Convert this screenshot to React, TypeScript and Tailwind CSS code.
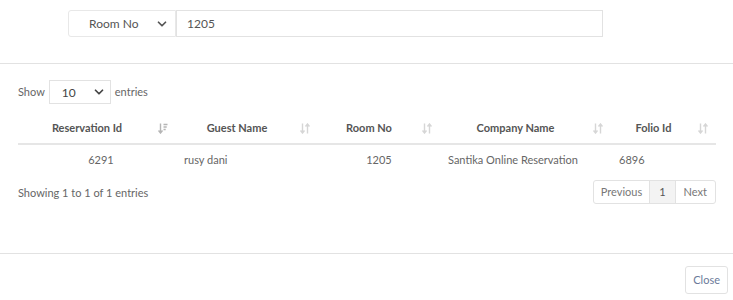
import { ChevronDown } from "lucide-react";

const font = { fontFamily: '"Lato", "Open Sans", sans-serif' };

function SortBoth() {
    return (
        <svg width="10" height="11" viewBox="0 0 10 11" className="text-[#d6d6d6]">
            <path d="M2.5 0.5v9M0.5 7.5l2 2.5 2-2.5" stroke="currentColor" strokeWidth="1.4" fill="none" />
            <path d="M7.5 10.5v-9M5.5 3.5l2-2.5 2 2.5" stroke="currentColor" strokeWidth="1.4" fill="none" />
        </svg>
    );
}

function SortDown() {
    return (
        <svg width="10" height="11" viewBox="0 0 10 11" className="text-[#b5b5b5]">
            <path d="M2.5 0.5v9M0.5 7.5l2 2.5 2-2.5" stroke="currentColor" strokeWidth="1.4" fill="none" />
            <path d="M5.5 1.5h4M5.5 4h3.2M5.5 6.5h2.2" stroke="currentColor" strokeWidth="1.3" fill="none" />
        </svg>
    );
}

const cols = [
    { label: "Reservation Id", w: "w-[158px]", active: true },
    { label: "Guest Name", w: "w-[142px]" },
    { label: "Room No", w: "w-[122px]" },
    { label: "Company Name", w: "w-[171px]" },
    { label: "Folio Id", w: "w-[105px]" },
];

export default function App() {
    return (
        <div className="w-[733px] h-[300px] bg-white text-[11px] leading-[16px] text-[#666] flex flex-col overflow-hidden" style={font}>
            {/* Search */}
            <div className="h-[64px] shrink-0 border-b border-[#e2e2e2] pt-[10px] pl-[68px]">
                <div className="flex">
                    <div className="w-[108px] h-[27px] border border-[#e8e8e8] rounded-l-[3px] flex items-center justify-between pl-[20px] pr-[6px] text-[#555] text-[12px]">
                        <span>Room No</span>
                        <ChevronDown className="w-[14px] h-[14px] text-[#555]" strokeWidth={3} />
                    </div>
                    <div className="w-[427px] h-[27px] border border-[#e2e2e2] flex items-center pl-[10px] text-[#555] text-[12px]">
                        1205
                    </div>
                </div>
            </div>

            {/* Table area */}
            <div className="h-[190px] shrink-0 px-[18px] border-b border-[#e2e2e2]">
                <div className="flex items-center h-[24px] mt-[16px] gap-[4px]">
                    <span>Show</span>
                    <div className="w-[62px] h-[24px] border border-[#e2e2e2] flex items-center justify-between pl-[12px] pr-[4px] text-[#444] text-[12px]">
                        <span className="pt-[2px]">10</span>
                        <ChevronDown className="w-[14px] h-[14px] text-[#444]" strokeWidth={3} />
                    </div>
                    <span>entries</span>
                </div>

                <div className="mt-[9px] w-[698px]">
                    <div className="flex h-[32px] border-b-2 border-[#e6e6e6] font-bold text-[#555]">
                        {cols.map((c) => (
                            <div key={c.label} className={`${c.w} flex items-center pl-[8px] pr-[8px]`}>
                                <span className="flex-1 text-center pr-[10px]">{c.label}</span>
                                {c.active ? <SortDown /> : <SortBoth />}
                            </div>
                        ))}
                    </div>
                    <div className="flex h-[29px] items-center text-[#666]">
                        <div className="w-[158px] pl-[8px] text-center">6291</div>
                        <div className="w-[142px] pl-[8px]">rusy dani</div>
                        <div className="w-[122px] pl-[8px] pr-[8px] text-center">1205</div>
                        <div className="w-[171px] pl-[8px]">Santika Online Reservation</div>
                        <div className="w-[105px] pl-[8px]">6896</div>
                    </div>
                </div>

                <div className="flex items-center justify-between mt-[6px] w-[698px]">
                    <span className="text-[#666] pt-[2px]">Showing 1 to 1 of 1 entries</span>
                    <div className="flex h-[24px] border border-[#e2e2e2] rounded-[3px] text-[#777]">
                        <div className="px-[7px] flex items-center">Previous</div>
                        <div className="px-[9px] flex items-center bg-[#f3f3f3] border-l border-r border-[#e2e2e2] text-[#555]">1</div>
                        <div className="px-[8px] flex items-center">Next</div>
                    </div>
                </div>
            </div>

            {/* Footer */}
            <div className="flex-1 flex justify-end items-start pr-[5px] pt-[12px]">
                <button className="h-[28px] px-[7px] border border-[#e2e2e2] rounded-[3px] text-[#6b7a99] text-[11px]">
                    Close
                </button>
            </div>
        </div>
    );
}
